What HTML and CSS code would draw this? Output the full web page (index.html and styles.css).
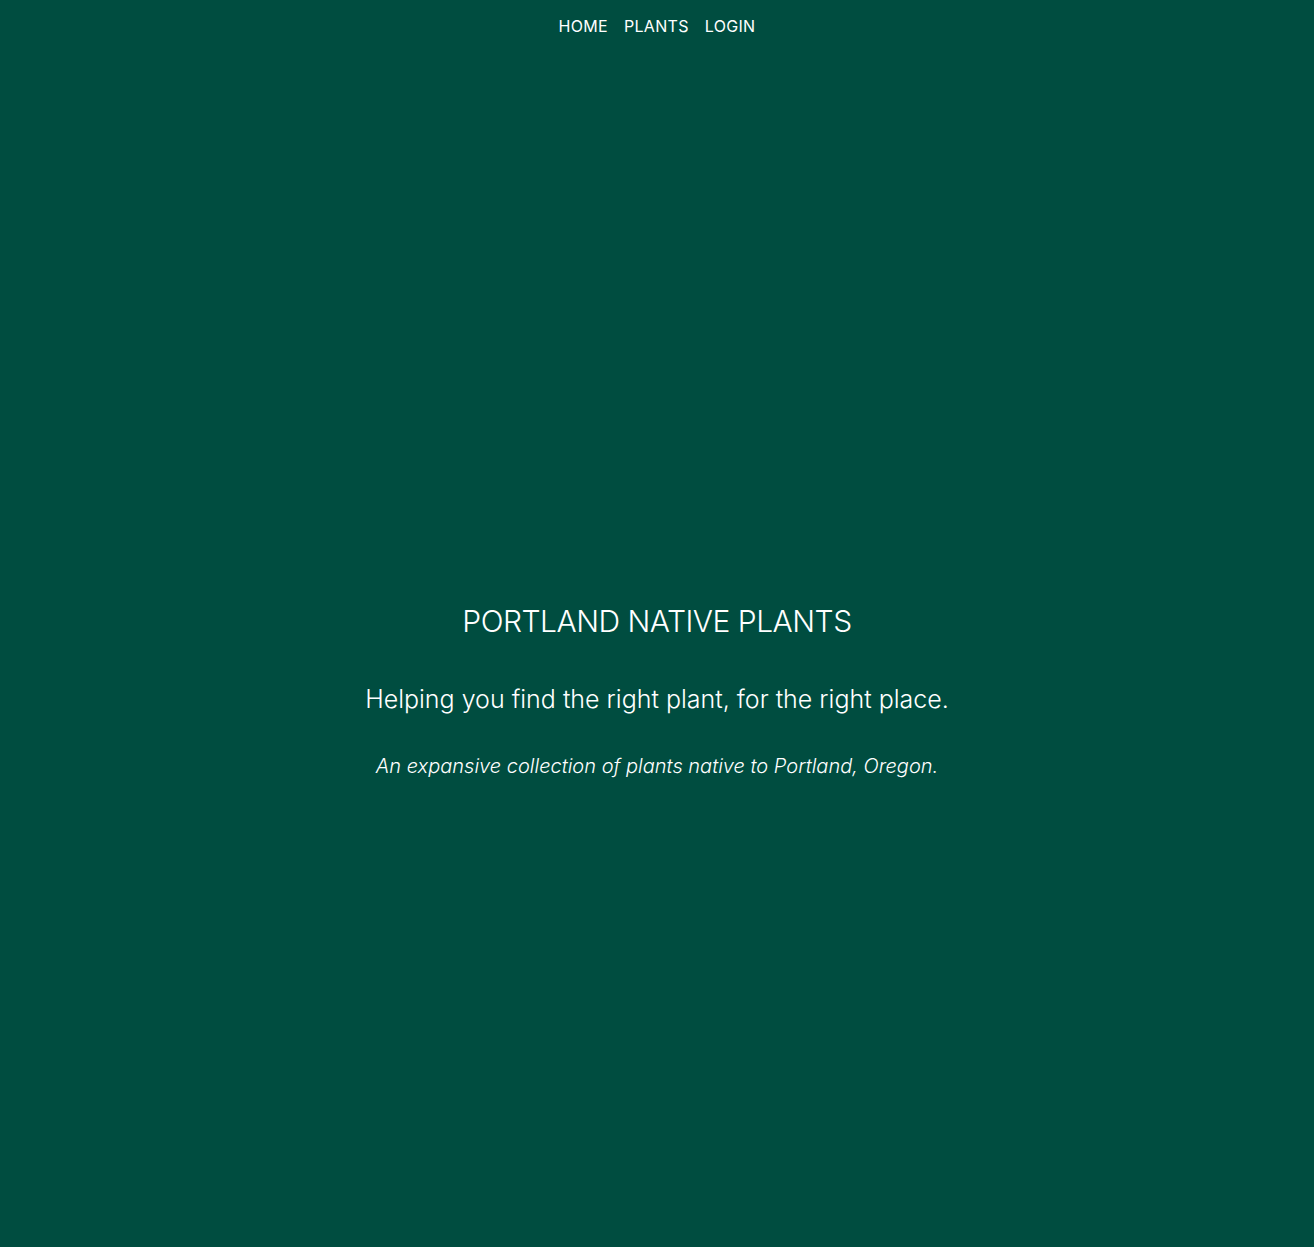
FILE: index.html
```html
<!DOCTYPE html>
<html lang="en">
<head>
<meta charset="utf-8">
<title>Portland Native Plants</title>
<link rel="stylesheet" href="styles.css">
</head>
<body>
<nav class="nav">
  <a class="nav-link" href="#">HOME</a>
  <a class="nav-link" href="#">PLANTS</a>
  <a class="nav-link" href="#">LOGIN</a>
</nav>
<main class="hero">
  <h1 class="hero-title">PORTLAND NATIVE PLANTS</h1>
  <p class="hero-sub">Helping you find the right plant, for the right place.</p>
  <p class="hero-note">An expansive collection of plants native to Portland, Oregon.</p>
</main>
</body>
</html>
```
FILE: styles.css
```css
html, body {
  margin: 0;
  padding: 0;
}
body {
  background: #004d40;
  color: #ffffff;
  font-family: Inter, "Noto Sans", sans-serif;
  min-height: 100vh;
}
.nav {
  display: flex;
  justify-content: center;
  gap: 16px;
  padding-top: 17px;
  height: 35px;
}
.nav-link {
  color: #ffffff;
  text-decoration: none;
  font-size: 16px;
  line-height: 18px;
  letter-spacing: 0.3px;
}
.hero {
  display: flex;
  flex-direction: column;
  align-items: center;
  padding-top: 549px;
  text-align: center;
}
.hero-title {
  margin: 0;
  font-size: 30px;
  line-height: 40px;
  font-weight: 300;
  letter-spacing: -0.5px;
}
.hero-sub {
  margin: 43px 0 0;
  font-size: 25px;
  line-height: 30px;
  font-weight: 300;
}
.hero-note {
  margin: 40px 0 0;
  font-size: 20px;
  line-height: 24px;
  font-style: italic;
  font-weight: 300;
}
```
